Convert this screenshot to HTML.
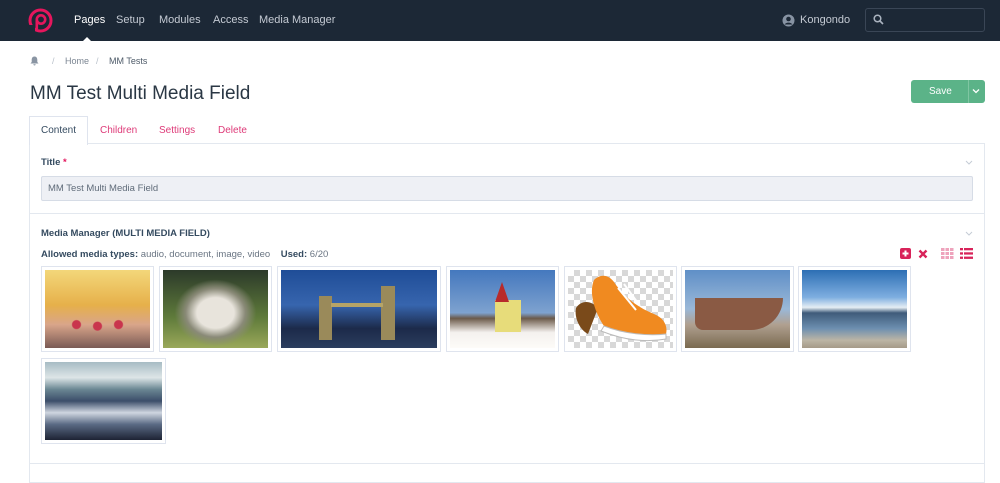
<!DOCTYPE html>
<html><head><meta charset="utf-8"><style>
*{box-sizing:border-box;margin:0;padding:0}
body{width:1000px;height:472px;overflow:hidden;background:#fff;font-family:"Liberation Sans",sans-serif;position:relative;color:#354b60}
.nav{position:absolute;left:0;top:0;width:1000px;height:41px;background:#1c2836}
.nav a{position:absolute;top:14px;font-size:11px;color:#c4cad3}
.abs{position:absolute}
.thumb{position:absolute;border:1px solid #dfe4ee;background:#fff;padding:3px}
.thumb div{width:100%;height:100%}
</style></head><body>
<div class="nav">
<svg class="abs" style="left:28px;top:8px" width="25" height="25" viewBox="0 0 25 25"><circle cx="12.5" cy="12.5" r="10.5" fill="none" stroke="#e6165d" stroke-width="3"/><circle cx="13" cy="11.5" r="4.2" fill="none" stroke="#e6165d" stroke-width="2.6"/><path d="M8.8 11.5V21" stroke="#e6165d" stroke-width="2.6"/><rect x="0" y="17" width="7" height="8" fill="#1c2836"/></svg>
<a style="left:74px;color:#fff">Pages</a>
<a style="left:116px">Setup</a>
<a style="left:159px">Modules</a>
<a style="left:213px">Access</a>
<a style="left:259px">Media Manager</a>
<div class="abs" style="left:83px;top:37px;width:0;height:0;border-left:4px solid transparent;border-right:4px solid transparent;border-bottom:4px solid #fff"></div>
<svg class="abs" style="left:782px;top:14px" width="13" height="13" viewBox="0 0 13 13"><circle cx="6.5" cy="6.5" r="6" fill="#8793a3"/><circle cx="6.5" cy="5" r="2.3" fill="#1c2836"/><path d="M2.5 10.5a4.5 3.5 0 0 1 8 0" fill="#1c2836"/></svg>
<a style="left:800px;color:#c4cad3">Kongondo</a>
<div class="abs" style="left:865px;top:8px;width:120px;height:24px;border:1px solid #3a4656;border-radius:3px"></div>
<svg class="abs" style="left:873px;top:14px" width="11" height="11" viewBox="0 0 11 11"><circle cx="4.5" cy="4.5" r="3.3" fill="none" stroke="#aab3bf" stroke-width="1.5"/><path d="M7 7l3 3" stroke="#aab3bf" stroke-width="1.6"/></svg>
</div>
<svg class="abs" style="left:30px;top:56px" width="9" height="10" viewBox="0 0 9 10"><path d="M4.5 0.5c-2 0-2.8 1.6-2.8 3.5v2L0.5 7.5h8L7.3 6V4c0-1.9-.8-3.5-2.8-3.5zM3.3 8.3h2.4a1.2 1.2 0 0 1-2.4 0z" fill="#8a95a3"/></svg>
<div class="abs" style="left:52px;top:56px;font-size:9px;color:#b8c0ca">/</div>
<div class="abs" style="left:65px;top:56px;font-size:9px;color:#7b8592">Home</div>
<div class="abs" style="left:96px;top:56px;font-size:9px;color:#b8c0ca">/</div>
<div class="abs" style="left:109px;top:56px;font-size:9px;color:#4d5a68">MM Tests</div>
<div class="abs" style="left:30px;top:83px;font-size:19px;color:#2a3744">MM Test Multi Media Field</div>
<div class="abs" style="left:911px;top:80px;width:74px;height:23px;background:#5bb388;border-radius:3px"></div>
<div class="abs" style="left:968px;top:80px;width:1px;height:23px;background:#7fc6a2"></div>
<div class="abs" style="left:929px;top:86px;font-size:10px;color:#fff">Save</div>
<svg class="abs" style="left:972px;top:88px" width="8" height="6"><path d="M1 1.5l3 3 3-3" stroke="#fff" fill="none" stroke-width="1.3"/></svg>
<div class="abs" style="left:29px;top:116px;width:59px;height:29px;border:1px solid #dfe4ee;border-bottom:none;background:#fff;z-index:2"></div>
<div class="abs" style="left:41px;top:125px;font-size:10px;color:#354b60;z-index:3">Content</div>
<div class="abs" style="left:100px;top:125px;font-size:10px;color:#de3a78">Children</div>
<div class="abs" style="left:159px;top:125px;font-size:10px;color:#de3a78">Settings</div>
<div class="abs" style="left:218px;top:125px;font-size:10px;color:#de3a78">Delete</div>
<div class="abs" style="left:29px;top:143px;width:956px;height:340px;border:1px solid #e3e8ef"></div>
<div class="abs" style="left:29px;top:213px;width:956px;height:1px;background:#e3e8ef"></div>
<div class="abs" style="left:29px;top:463px;width:956px;height:1px;background:#e3e8ef"></div>
<div class="abs" style="left:41px;top:157px;font-size:9.5px;font-weight:bold;color:#354b60">Title <span style="color:#e3165d">*</span></div>
<svg class="abs" style="left:965px;top:160px" width="8" height="5"><path d="M1 1l3 3 3-3" stroke="#c5ccd6" fill="none"/></svg>
<svg class="abs" style="left:965px;top:231px" width="8" height="5"><path d="M1 1l3 3 3-3" stroke="#c5ccd6" fill="none"/></svg>
<div class="abs" style="left:41px;top:176px;width:932px;height:25px;background:#eef0f5;border:1px solid #d6dce6;border-radius:2px"></div>
<div class="abs" style="left:48px;top:183px;font-size:9.5px;color:#5f6b79">MM Test Multi Media Field</div>
<div class="abs" style="left:41px;top:228px;font-size:9.5px;font-weight:bold;color:#354b60">Media Manager (MULTI MEDIA FIELD)</div>
<div class="abs" style="left:41px;top:249px;font-size:9.5px;color:#6a7583"><b style="color:#354b60">Allowed media types:</b> audio, document, image, video &nbsp;&nbsp;&nbsp;<b style="color:#354b60">Used:</b> 6/20</div>
<svg class="abs" style="left:900px;top:248px" width="12" height="12"><rect x="0" y="0" width="11" height="11" rx="2" fill="#d8235a"/><path d="M5.5 2.5v6M2.5 5.5h6" stroke="#fff" stroke-width="2"/></svg>
<svg class="abs" style="left:918px;top:249px" width="10" height="10"><path d="M1.5 1.5l7 7M8.5 1.5l-7 7" stroke="#d8235a" stroke-width="2.4"/></svg>
<svg class="abs" style="left:941px;top:248px" width="13" height="11"><g fill="#eea3bc"><rect x="0" y="0" width="3.5" height="3"/><rect x="4.5" y="0" width="3.5" height="3"/><rect x="9" y="0" width="3.5" height="3"/><rect x="0" y="4" width="3.5" height="3"/><rect x="4.5" y="4" width="3.5" height="3"/><rect x="9" y="4" width="3.5" height="3"/><rect x="0" y="8" width="3.5" height="3"/><rect x="4.5" y="8" width="3.5" height="3"/><rect x="9" y="8" width="3.5" height="3"/></g></svg>
<svg class="abs" style="left:960px;top:248px" width="13" height="11"><g fill="#d8235a"><rect x="0" y="0" width="3" height="2.3"/><rect x="4" y="0" width="9" height="2.3"/><rect x="0" y="4.3" width="3" height="2.3"/><rect x="4" y="4.3" width="9" height="2.3"/><rect x="0" y="8.6" width="3" height="2.3"/><rect x="4" y="8.6" width="9" height="2.3"/></g></svg>

<div class="thumb" style="left:41px;top:266px;width:113px;height:86px"><div style="background:radial-gradient(circle at 30% 70%,#c9354d 0 4px,transparent 5px),radial-gradient(circle at 50% 72%,#c9354d 0 4px,transparent 5px),radial-gradient(circle at 70% 70%,#c9354d 0 4px,transparent 5px),linear-gradient(180deg,#f3d77a 0%,#e6b04a 45%,#d9a58a 70%,#7a5a55 100%)"></div></div>
<div class="thumb" style="left:159px;top:266px;width:113px;height:86px"><div style="background:radial-gradient(ellipse at 50% 55%,#e8e4dc 0 25%,#8a8a78 40%,transparent 55%),linear-gradient(180deg,#2c3a2a,#5e7a3a 60%,#9aa85a)"></div></div>
<div class="thumb" style="left:277px;top:266px;width:164px;height:86px"><div style="background:linear-gradient(180deg,#1f4d97 0%,#3765ae 45%,#1c2a4a 75%,#2b3d5e 100%);position:relative"><div style="position:absolute;left:38px;top:26px;width:13px;height:44px;background:#9a8a5a"></div><div style="position:absolute;left:100px;top:16px;width:14px;height:54px;background:#9a8a5a"></div><div style="position:absolute;left:50px;top:33px;width:52px;height:4px;background:#b6a467"></div></div></div>
<div class="thumb" style="left:446px;top:266px;width:113px;height:86px"><div style="background:linear-gradient(180deg,#4478be 0%,#7ea2cf 55%,#6b5a4a 62%,#f4f1ee 80%,#fdfbf8 100%);position:relative"><div style="position:absolute;left:45px;top:30px;width:26px;height:32px;background:#e7dc7a"></div><div style="position:absolute;left:45px;top:12px;width:0;height:0;border-left:7px solid transparent;border-right:7px solid transparent;border-bottom:20px solid #b82b2b"></div></div></div>
<div class="thumb" style="left:564px;top:266px;width:113px;height:86px"><div style="background:repeating-conic-gradient(#d8d8d8 0 25%,#fff 0 50%) 0 0/12px 12px;position:relative"><svg width="105" height="78" style="position:absolute;left:0;top:0"><path d="M8 38c5-8 15-8 22 0l-10 26c-8-4-14-16-12-26z" fill="#7a4a1a"/><path d="M26 10c6-6 14-6 20 2 8 12 20 24 40 32 10 4 14 12 12 20-20 6-45 2-62-8C28 44 20 24 26 10z" fill="#f08a20"/><path d="M36 56c20 8 45 10 62 8v5c-22 4-45 0-65-8z" fill="#fff" stroke="#bbb"/><path d="M50 18l18 22M56 14l16 22" stroke="#fff" stroke-width="2"/></svg></div></div>
<div class="thumb" style="left:681px;top:266px;width:113px;height:86px"><div style="background:linear-gradient(180deg,#5f8fc7 0%,#9ab8d8 50%,#b0a090 70%,#7a6a50 100%);position:relative"><div style="position:absolute;left:10px;top:28px;width:88px;height:32px;background:#8a5a44;border-radius:0 0 40px 10px"></div></div></div>
<div class="thumb" style="left:798px;top:266px;width:113px;height:86px"><div style="background:linear-gradient(180deg,#2d6fb4 0%,#7eaee0 35%,#e6eef4 48%,#3f5b7a 55%,#6d8fb0 75%,#bcb5a5 90%,#a59a88 100%)"></div></div>
<div class="thumb" style="left:41px;top:358px;width:125px;height:86px"><div style="background:linear-gradient(180deg,#a7bcc4 0%,#dde5e7 20%,#6b8793 35%,#3c4e6a 50%,#cfd6e0 65%,#5a6a84 80%,#1d2334 100%)"></div></div>
</body></html>
